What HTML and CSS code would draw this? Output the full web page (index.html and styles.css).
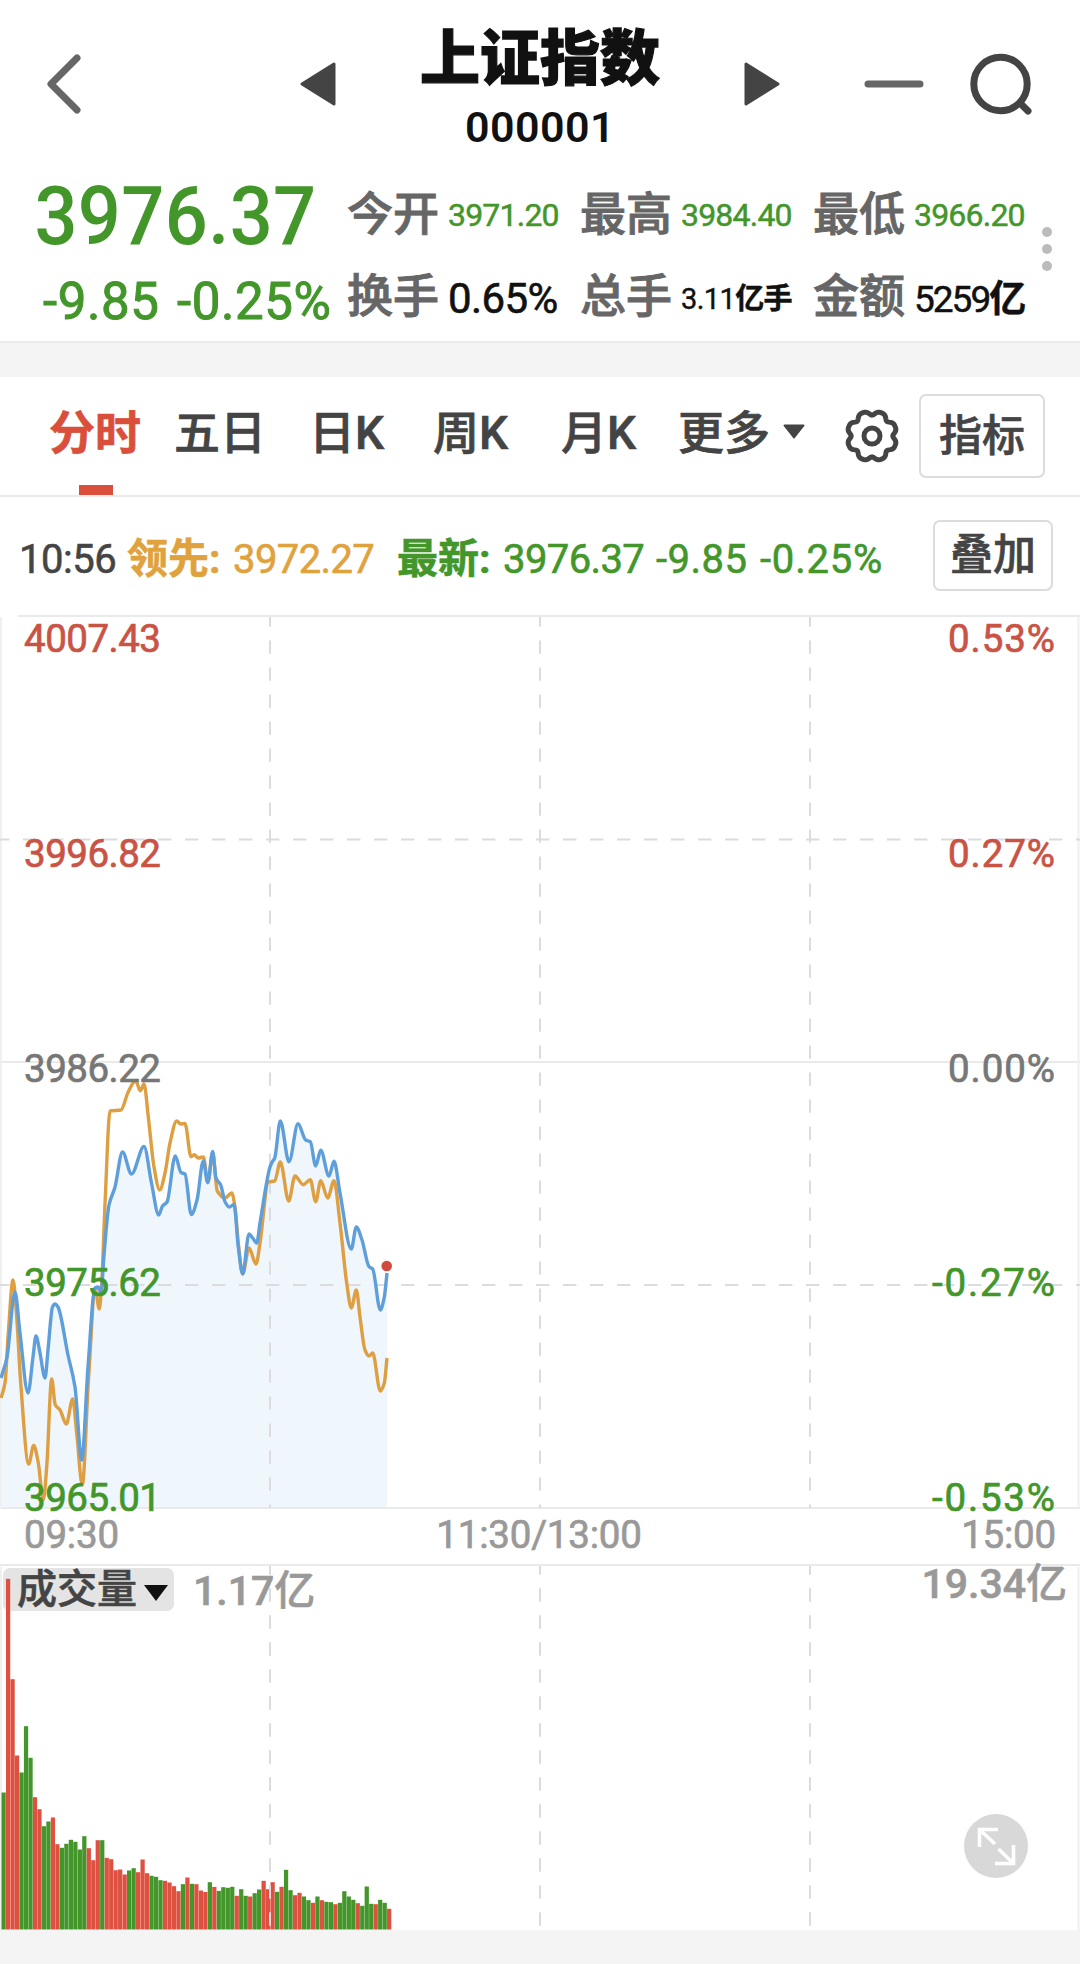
FILE: index.html
```html
<!DOCTYPE html>
<html lang="zh-CN">
<head>
  <meta charset="UTF-8">
  <title>上证指数 000001</title>
  <meta name="viewport" content="width=device-width, initial-scale=1">
  <link rel="stylesheet" href="styles.css">
</head>
<body>
  <header class="topbar">
    <svg class="back" viewBox="0 0 34 60"><path d="M30 4 L4 30 L30 56"/></svg>
    <svg class="prev" viewBox="0 0 36 44"><path d="M34 2 V42 L2 22 Z"/></svg>
    <div class="title">
      <h1>上证指数</h1>
      <div class="code">000001</div>
    </div>
    <svg class="next" viewBox="0 0 36 44"><path d="M2 2 V42 L34 22 Z"/></svg>
    <svg class="minus" viewBox="0 0 60 8"><path d="M4 4 H56"/></svg>
    <svg class="search" viewBox="0 0 64 64"><circle cx="30.500" cy="32" r="26.700"/><path d="M51 52 L58 59"/></svg>
  </header>

  <section class="quote">
    <div class="price-box">
      <div class="price">3976.37</div>
      <div class="change"><span>-9.85</span><span>-0.25%</span></div>
    </div>
    <div class="stats">
      <div class="stat"><label>今开</label><b class="green v1">3971.20</b></div>
      <div class="stat"><label>最高</label><b class="green v1">3984.40</b></div>
      <div class="stat"><label>最低</label><b class="green v1">3966.20</b></div>
      <div class="stat"><label>换手</label><b class="v2">0.65%</b></div>
      <div class="stat"><label>总手</label><b class="v3">3.11<i>亿手</i></b></div>
      <div class="stat"><label>金额</label><b class="v4">5259<i>亿</i></b></div>
    </div>
    <div class="dots"><span></span><span></span><span></span></div>
  </section>

  <nav class="tabs">
    <a class="tab t1 active">分时</a>
    <a class="tab t2">五日</a>
    <a class="tab t3">日K</a>
    <a class="tab t4">周K</a>
    <a class="tab t5">月K</a>
    <a class="tab t6">更多</a>
    <svg class="caret" viewBox="0 0 22 15"><path d="M1.500 1.500 H20.500 L11 13.500 Z"/></svg>
    <svg class="gear" viewBox="-30 -30 60 60"><path id="gearPath"/><circle r="8"/></svg>
    <button class="btn indicator">指标</button>
  </nav>

  <div class="info">
    <span class="time">10:56</span>
    <span class="lead cn">领先:</span>
    <span class="lead num">3972.27</span>
    <span class="last cn">最新:</span>
    <span class="last num">3976.37</span>
    <span class="last diff">-9.85</span>
    <span class="last pct">-0.25%</span>
    <button class="btn overlay">叠加</button>
  </div>

  <svg class="chart" viewBox="0 615 1080 900">
    <path id="area" class="area"/>
    <path class="line" d="M18 616 H1080 M0 1062 H1080 M0 1508 H1080"/>
    <path class="edge" d="M1 617 V1508 M1078.500 617 V1508"/>
    <path class="dash" d="M-4 839.500 H1080 M-4 1285 H1080"/>
    <path class="dash dash-v" d="M270 617 V1508 M540 617 V1508 M810 617 V1508"/>
    <path id="avg" class="avg"/>
    <path id="now" class="now"/>
    <circle class="point" cx="386.700" cy="1266" r="5.300"/>
    <g class="axis">
      <text class="up" x="24" y="652" textLength="137">4007.43</text>
      <text class="up" x="24" y="867" textLength="137">3996.82</text>
      <text class="flat" x="24" y="1082" textLength="137">3986.22</text>
      <text class="down" x="24" y="1296" textLength="137">3975.62</text>
      <text class="down" x="24" y="1511" textLength="137">3965.01</text>
      <text class="up" x="948" y="652" textLength="107">0.53%</text>
      <text class="up" x="948" y="867" textLength="107">0.27%</text>
      <text class="flat" x="948" y="1082" textLength="107">0.00%</text>
      <text class="down" x="932" y="1296" textLength="123">-0.27%</text>
      <text class="down" x="932" y="1511" textLength="123">-0.53%</text>
    </g>
  </svg>

  <div class="times">
    <span>09:30</span><span class="mid">11:30/13:00</span><span>15:00</span>
  </div>

  <section class="volume">
    <div class="vol-head">
      <div class="vol-tag">成交量<svg viewBox="0 0 24 16"><path d="M0 0 H24 L12 16 Z"/></svg></div>
      <div class="vol-now">1.17<i>亿</i></div>
      <div class="vol-max">19.34<i>亿</i></div>
    </div>
    <svg class="bars" viewBox="0 1566 1080 364">
      <path class="edge" d="M1 1567 V1930 M1078.500 1567 V1930"/>
      <g id="bars"></g>
      <path class="dash" d="M270 1561.300 V1930 M540 1561.300 V1930 M810 1561.300 V1930"/>
    </svg>
    <svg class="expand" viewBox="0 0 64 64">
      <circle cx="32" cy="32" r="32"/>
      <path d="M15.500 33 V15.500 H34 M15.500 15.500 L31 30 M34.500 35 L49.500 49.500 M49.500 31 V49.500 H31"/>
    </svg>
  </section>
  <div class="footer-gap"></div>

  <script src="script.js"></script>
</body>
</html>
```
FILE: styles.css
```css
* { box-sizing: border-box; }
body { margin: 0; width: 1080px; background: #fff; color: #111; font-family: Roboto, "Noto Sans CJK SC", sans-serif; font-weight: 500; }
svg { display: block; flex: none; }
i { font-style: normal; }
button { font-family: inherit; }

.topbar { display: flex; align-items: center; height: 168px; padding-left: 47px; }
.back { width: 34px; height: 60px; margin-right: 219px; fill: none; stroke: #666; stroke-width: 7; stroke-linecap: round; stroke-linejoin: round; }
.prev, .next { width: 36px; height: 44px; fill: #444; stroke: #444; stroke-width: 3; stroke-linejoin: round; }
.title { width: 408px; height: 168px; padding-top: 22px; text-align: center; }
.title h1 { margin: 0; font-size: 60px; line-height: 76px; font-weight: 900; -webkit-text-stroke: 1.2px #111; }
.code { font-size: 43px; line-height: 58px; letter-spacing: 0.4px; font-weight: 600; }
.minus { width: 60px; height: 8px; margin-left: 84px; fill: none; stroke: #666; stroke-width: 7; stroke-linecap: round; }
.search { width: 64px; height: 64px; margin-left: 46px; fill: none; stroke: #444; stroke-width: 7; stroke-linecap: round; }

.quote { display: flex; height: 175px; border-bottom: 2px solid #eaeaea; }
.price-box { width: 347px; color: #43962a; }
.price { width: 300px; padding-left: 37px; font-size: 81.5px; line-height: 96px; letter-spacing: 0.4px; white-space: nowrap; transform: scaleX(0.93); transform-origin: left; }
.change { display: flex; padding-left: 43px; font-size: 51px; line-height: 76px; letter-spacing: 0.6px; font-weight: 400; -webkit-text-stroke: 1px; white-space: nowrap; }
.change span { width: 134px; }
.stats { display: grid; grid-template-columns: 233px 233px 223px; grid-template-rows: 92px 72px; }
.stat { display: flex; align-items: center; }
.stat label { width: 92px; margin-right: 9px; font-size: 46px; line-height: 60px; color: #666; white-space: nowrap; -webkit-text-stroke: 0.9px #666; }
.stat b { font-weight: 500; white-space: nowrap; }
.stat b i { font-weight: 700; -webkit-text-stroke: 0.5px; }
.green { color: #43962a; }
.stat .v1 { padding-top: 2px; font-size: 32px; letter-spacing: -0.8px; font-weight: 400; -webkit-text-stroke: 0.5px; }
.stat .v2 { padding-top: 4px; font-size: 42px; letter-spacing: -0.6px; font-weight: 400; -webkit-text-stroke: 0.6px; }
.stat .v3 { font-size: 29px; letter-spacing: -0.6px; font-weight: 400; -webkit-text-stroke: 0.4px; }
.stat .v4 { font-size: 37px; letter-spacing: -2px; font-weight: 400; -webkit-text-stroke: 0.5px; }
.dots { display: flex; flex-direction: column; gap: 7px; padding-top: 59px; margin-left: 6px; }
.dots span { width: 10px; height: 10px; border-radius: 50%; background: #bbb; }

.tabs { display: flex; align-items: center; height: 154px; padding: 0 35px 0 49px; border-top: 34px solid #f4f4f4; border-bottom: 2px solid #eaeaea; color: #444; }
.tab { position: relative; height: 118px; font-size: 46px; line-height: 112px; white-space: nowrap; -webkit-text-stroke: 0.7px; }
.tab.active { color: #d94f3b; font-weight: 700; }
.tab.active::after { content: ""; position: absolute; left: 30px; bottom: 0; width: 34px; height: 10px; background: #d94f3b; }
.t1 { width: 125px; }
.t2 { width: 135px; }
.t3 { width: 124px; }
.t4 { width: 128px; }
.t5 { width: 117px; }
.t6 { width: 105px; }
.caret { width: 22px; height: 15px; margin-bottom: 10px; fill: #444; stroke: #444; stroke-width: 2; stroke-linejoin: round; }
.gear { width: 60px; height: 60px; margin-left: 37px; fill: none; stroke: #444; stroke-width: 5; stroke-linejoin: round; }
.btn { padding: 0; background: #fff; border: 2px solid #dcdcdc; border-radius: 7px; color: #444; font-size: 43px; font-weight: 500; text-align: center; white-space: nowrap; -webkit-text-stroke: 0.6px; }
.indicator { width: 126px; height: 84px; margin-left: 17px; line-height: 78px; }
.overlay { width: 120px; height: 71px; margin-bottom: 2px; font-size: 43px; line-height: 67px; }

.info { display: flex; align-items: center; height: 118px; padding-left: 19px; font-size: 40px; font-weight: 400; white-space: nowrap; color: #444; }
.info span { flex: none; padding-top: 6px; -webkit-text-stroke: 0.6px; }
.time { width: 108px; letter-spacing: -0.5px; }
.info .cn { width: 106px; padding: 0 0 3px; font-size: 41px; font-weight: 700; }
.info .num { width: 164px; letter-spacing: -0.6px; }
.info .last.num { width: 153px; }
.info .diff { width: 104px; letter-spacing: 0.5px; }
.info .pct { width: 173px; letter-spacing: 0.8px; }
.lead { color: #e0a23c; }
.last { color: #43962a; }

.chart { width: 1080px; height: 900px; overflow: visible; }
.line { stroke: #eaeaea; stroke-width: 2; fill: none; }
.edge { stroke: #f0f0f0; stroke-width: 2; fill: none; }
.dash { stroke: #dcdce0; stroke-width: 2; fill: none; stroke-dasharray: 13.4 13.6; }
.dash-v { stroke-dashoffset: 3.6; }
.area { fill: #eff6fc; }
.avg, .now { fill: none; stroke-width: 3.4; stroke-linejoin: round; }
.avg { stroke: #dd9f42; }
.now { stroke: #5e9fdb; }
.point { fill: #d04a3e; }
.axis { font-size: 38.5px; font-weight: 400; }
.axis text { stroke-width: 0.7px; }
.up { fill: #c95345; stroke: #c95345; }
.flat { fill: #777; stroke: #777; }
.down { fill: #43962a; stroke: #43962a; }

.times { display: flex; justify-content: space-between; height: 51px; padding: 0 24px 0 24px; border-bottom: 2px solid #eaeaea; font-size: 38.5px; line-height: 40px; letter-spacing: -0.2px; font-weight: 400; color: #999; -webkit-text-stroke: 0.7px; }
.mid { margin-right: 2px; }

.volume { position: relative; height: 364px; }
.vol-head { position: absolute; left: 3px; top: 2px; width: 1064px; display: flex; color: #999; font-size: 41px; line-height: 46px; font-weight: 500; }
.vol-tag { display: flex; align-items: center; width: 171px; height: 43px; padding-left: 14px; border-radius: 7px; background: #e4e4e4; color: #444; font-size: 40px; line-height: 48px; font-weight: 500; white-space: nowrap; -webkit-text-stroke: 0.6px; }
.vol-tag svg { width: 24px; height: 16px; margin: 6px 0 0 7px; fill: #111; }
.vol-now, .vol-max { -webkit-text-stroke: 0.6px; }
.vol-now { margin-left: 19px; }
.vol-max { margin: -7px 0 0 auto; }
.bars { position: relative; width: 1080px; height: 364px; }
.bar-up { fill: #de5040; }
.bar-down { fill: #43962a; }
.expand { position: absolute; left: 964px; top: 248px; width: 64px; height: 64px; fill: #d8d8d8; }
.expand path { fill: none; stroke: #fff; stroke-width: 3.6; }
.footer-gap { height: 34px; background: #f4f4f4; }
```
FILE: script.js
```js
const now = [[1,1378],[7,1357],[15,1292],[20,1333],[28,1393],[33,1357],[36,1336],[40,1353],[45,1378],[48,1350],[52.5,1307],[55,1304],[58,1307],[68,1355],[75,1387],[81.7,1460],[88,1367],[95,1288],[98,1287],[101,1293],[104,1255],[109,1205],[115,1187],[122.5,1152],[131.5,1174],[144,1146.5],[151.5,1183],[158.7,1215],[162.5,1206],[167,1202],[175.3,1156],[181,1172.5],[185,1174],[191.3,1214.5],[197,1200],[203.3,1161],[207.7,1182.7],[212.7,1151.5],[216,1178],[220.7,1185],[225,1201.7],[229.3,1207],[234,1204.5],[238.3,1247],[242.7,1274],[249,1234],[252.7,1238],[256.7,1243],[260,1223],[270,1167],[272.3,1161.7],[274.7,1158],[280.3,1121],[289,1161.7],[298,1123.7],[305.7,1140],[310.3,1141.7],[315.7,1166],[320.7,1150.3],[329,1176],[334,1161.3],[340,1193],[351.3,1249],[356.3,1227],[362,1240],[369,1266.7],[372.7,1269],[380.3,1310],[384.3,1297],[387,1273]];
const avg = [[1,1398],[5,1383],[8.3,1333],[13,1280],[16.7,1317],[20.7,1383],[28.7,1464],[33.7,1445.5],[38.3,1463],[43.3,1500],[46.7,1467],[51.7,1379],[55.3,1405],[60,1410],[66.3,1424],[72.7,1399],[76.7,1433],[82.3,1485],[88.3,1383],[95.3,1290],[99.3,1309],[101.7,1283],[105.3,1197],[110,1111],[121,1110],[128.3,1091.7],[135.7,1080.7],[140.3,1090.7],[144,1084],[148.3,1117],[154,1167],[159.7,1190],[165,1173],[170,1143],[176.7,1121],[180.7,1124],[185,1123.5],[191,1156.7],[194.3,1154.7],[198.3,1158],[203.3,1157],[208,1182],[212.7,1153],[217.3,1191],[225,1198],[231.7,1193],[235,1207],[238.3,1243],[242.7,1274],[249,1248],[256,1264],[260,1243],[268.3,1182],[274.7,1181],[280.3,1162],[288.7,1201],[295,1176],[303.3,1184.7],[310.3,1179.7],[315.7,1201.7],[320.7,1180.7],[327.7,1198],[334,1180.7],[340,1223],[346.7,1283],[351.3,1308],[356.3,1290],[360,1317],[365,1350],[369,1356],[372.7,1353],[380.3,1391],[384.3,1383],[387,1358]];

// monotone cubic, so the peaks stay on the data points
function smooth(p) {
  const n = p.length, s = [], m = [];
  for (let i = 0; i < n - 1; i++) s.push((p[i + 1][1] - p[i][1]) / (p[i + 1][0] - p[i][0]));
  for (let i = 0; i < n; i++) {
    if (i === 0) m.push(s[0]);
    else if (i === n - 1) m.push(s[n - 2]);
    else m.push(s[i - 1] * s[i] <= 0 ? 0 : 2 * s[i - 1] * s[i] / (s[i - 1] + s[i]));
  }
  let d = `M${p[0][0]} ${p[0][1]}`;
  for (let i = 0; i < n - 1; i++) {
    const h = (p[i + 1][0] - p[i][0]) / 3;
    d += `C${p[i][0] + h} ${p[i][1] + m[i] * h} ${p[i + 1][0] - h} ${p[i + 1][1] - m[i + 1] * h} ${p[i + 1][0]} ${p[i + 1][1]}`;
  }
  return d;
}

document.getElementById("now").setAttribute("d", smooth(now));
document.getElementById("avg").setAttribute("d", smooth(avg));
document.getElementById("area").setAttribute("d", smooth(now) + "V1508H1Z");

// volume per minute, G = down, R = up
const vol = "G137 R350.7 R250.3 R174 G157 G203.3 G171.7 R132.3 R120.3 G103.3 G108 R112 R85.3 G81.7 G85.7 G89.7 G87.7 G80 G93.3 R81.3 R69.3 R89.3 G89.3 R71.7 R70.3 R59.3 R60 R55 G59 G61.3 R57.3 R70 R56.3 G53.7 G52.7 G49.3 R48.7 R47 R43.3 R38.3 G45.3 R52 G45.7 R45.3 R39 R37.5 G47.3 R42.6 G38.6 G42.3 G41.7 G42.7 R33.7 G40.3 G33.7 R33 G36.3 G40 R48.7 R40.3 R47.3 G37.7 R42.7 G59.7 G39.3 R34.3 R36.7 G33 G29.3 R26.7 G33 R29.3 G27.7 G27.3 R25.3 G26.7 G38.3 G33 G29.7 R26.3 G23.7 G43 G25.7 R25.3 G29.7 G26.7 R20.7";
document.getElementById("bars").innerHTML = vol.split(" ").map((v, i) => {
  const h = parseFloat(v.slice(1));
  return `<rect class="${v[0] === "R" ? "bar-up" : "bar-down"}" x="${(1.5 + 4.483 * i).toFixed(2)}" y="${(1929.5 - h).toFixed(1)}" width="4.25" height="${h}"/>`;
}).join("");

// eight-lobed cog outline
let g = "";
for (let a = 0; a < 360; a += 3) {
  const t = a * Math.PI / 180;
  const r = 23.4 - 2.1 * Math.cos(8 * t) - 0.5 * Math.cos(16 * t);
  g += (a ? "L" : "M") + (r * Math.sin(t)).toFixed(2) + " " + (-r * Math.cos(t)).toFixed(2);
}
document.getElementById("gearPath").setAttribute("d", g + "Z");
```
